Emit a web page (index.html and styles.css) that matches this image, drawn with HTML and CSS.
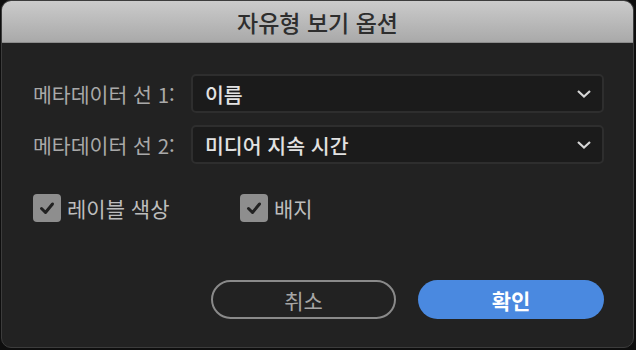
FILE: index.html
```html
<!DOCTYPE html>
<html lang="ko">
<head>
  <meta charset="UTF-8" />
  <title>자유형 보기 옵션</title>
  <link rel="stylesheet" href="styles.css">
</head>
<body>

  <div class="dialog">
    <div class="titlebar">자유형 보기 옵션</div>

    <div class="content">
      <div class="field">
        <span class="label">메타데이터 선 1:</span>
        <div class="select">
          <span>이름</span>
          <svg class="chevron" width="16" height="10" viewBox="0 0 16 10"><polyline points="2,2 8,7.5 14,2" /></svg>
        </div>
      </div>
      <div class="field">
        <span class="label">메타데이터 선 2:</span>
        <div class="select">
          <span>미디어 지속 시간</span>
          <svg class="chevron" width="16" height="10" viewBox="0 0 16 10"><polyline points="2,2 8,7.5 14,2" /></svg>
        </div>
      </div>

      <div class="checks">
        <label class="check">
          <span class="box"><svg width="20" height="20" viewBox="0 0 20 20"><polyline points="4.5,10.5 8.5,14.5 15.5,6" /></svg></span>
          레이블 색상
        </label>
        <label class="check">
          <span class="box"><svg width="20" height="20" viewBox="0 0 20 20"><polyline points="4.5,10.5 8.5,14.5 15.5,6" /></svg></span>
          배지
        </label>
      </div>

      <div class="actions">
        <button class="cancel">취소</button>
        <button class="ok">확인</button>
      </div>
    </div>
  </div>

</body>
</html>
```

FILE: styles.css
```css
* {
  margin: 0;
  padding: 0;
  box-sizing: border-box;
}

body {
  background-color: #0e0e0e;
  font-family: "Noto Sans CJK KR", "Liberation Sans", sans-serif;
  width: 636px;
  height: 350px;
  overflow: hidden;
}

.dialog {
  width: 633px;
  height: 348px;
  margin-left: 1px;
  background-color: #222;
  border: 1px solid #3c3c3c;
  border-radius: 10px;
  overflow: hidden;
}

.titlebar {
  height: 42px;
  background: linear-gradient(#cbcbcb, #a9a9a9);
  border-bottom: 1px solid #8c8c8c;
  color: #2e2e2e;
  font-size: 23px;
  font-weight: 500;
  text-align: center;
  line-height: 42px;
}

.content {
  padding: 31px 29px 0 31px;
}

.field {
  display: flex;
  align-items: center;
  margin-bottom: 12px;
}

.label {
  width: 158px;
  color: #a9a9a9;
  font-size: 20.5px;
  line-height: 28px;
  white-space: nowrap;
}

.select {
  flex: 1;
  height: 39px;
  display: flex;
  align-items: center;
  justify-content: space-between;
  padding: 0 10px 0 12px;
  background-color: #1b1b1b;
  border: 2px solid #2e2e2e;
  border-radius: 5px;
  color: #e2e2e2;
  font-size: 20.5px;
  line-height: 28px;
  font-weight: 500;
}

.chevron polyline {
  fill: none;
  stroke: #d6d6d6;
  stroke-width: 2.2;
}

.checks {
  display: flex;
  margin-top: 30px;
}

.check {
  width: 207px;
  display: flex;
  align-items: center;
  gap: 6px;
  color: #bdbdbd;
  font-size: 21px;
  line-height: 28px;
}

.check:last-child {
  width: auto;
}

.box {
  width: 28px;
  height: 28px;
  background-color: #8e8e8e;
  border-radius: 4px;
  display: flex;
  align-items: center;
  justify-content: center;
}

.box polyline {
  fill: none;
  stroke: #222;
  stroke-width: 3;
  stroke-linecap: round;
  stroke-linejoin: round;
}

.actions {
  display: flex;
  justify-content: flex-end;
  gap: 22px;
  margin-top: 58px;
}

.actions button {
  height: 39px;
  border-radius: 20px;
  font-family: inherit;
  font-size: 21px;
  line-height: 28px;
}

.cancel {
  width: 185px;
  background: transparent;
  border: 2px solid #8a8a8a;
  color: #a6a6a6;
}

.ok {
  width: 186px;
  background-color: #4a89e0;
  border: none;
  color: #fff;
  font-weight: 700;
}
```
